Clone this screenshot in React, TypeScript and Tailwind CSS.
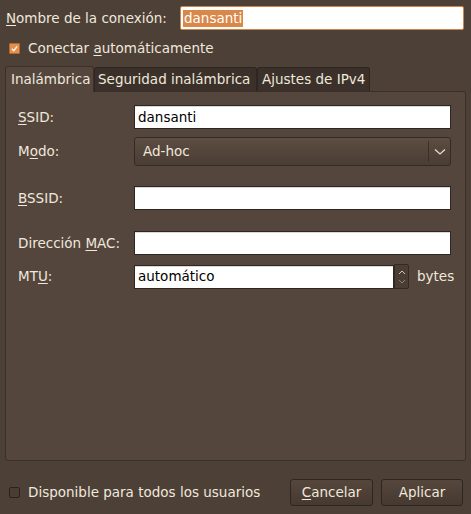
import React from 'react';

const font = { fontFamily: '"DejaVu Sans", "Liberation Sans", sans-serif' };

function Field({ value = '' }: { value?: string }) {
  return (
    <div className="flex h-[24px] w-[317px] items-center border border-[#2e2620] bg-white px-[3px] text-black shadow-[inset_0_1px_0_#d8d8d8]">
      {value}
    </div>
  );
}

function Label({ pre = '', u, post = '' }: { pre?: string; u: string; post?: string }) {
  return (
    <span className="w-[116px] text-[#efe8dc]">
      {pre}
      <span className="underline underline-offset-2">{u}</span>
      {post}
    </span>
  );
}

export default function App() {
  return (
    <div style={font} className="flex h-[514px] w-[471px] flex-col bg-[#4d4037] text-[13.5px] text-[#efe8dc]">
      {/* connection name */}
      <div className="mt-[6px] flex h-[24px] items-center pl-[6px]">
        <span className="w-[174px]">
          <span className="underline underline-offset-2">N</span>ombre de la conexión:
        </span>
        <div className="flex h-[24px] w-[284px] items-center rounded-[2px] border border-[#d0844a] bg-white px-[2px]">
          <span className="bg-[#d9884a] px-[1px] leading-[17px] text-white">dansanti</span>
        </div>
      </div>

      {/* autoconnect */}
      <div className="mt-[11px] flex h-[14px] items-center pl-[9px]">
        <span className="flex h-[11px] w-[11px] items-center justify-center rounded-[1px] border border-[#b8682f] bg-[#e0904f]">
          <svg viewBox="0 0 10 10" className="h-[9px] w-[9px]">
            <path d="M2 5.2 L4.2 7.4 L8 2.6" fill="none" stroke="#fff3e4" strokeWidth="1.6" />
          </svg>
        </span>
        <span className="ml-[8px]">
          Conectar <span className="underline underline-offset-2">a</span>utomáticamente
        </span>
      </div>

      {/* tabs */}
      <div className="mt-[11px] flex h-[25px] items-end pl-[5px]">
        <div className="relative z-10 -mb-px flex h-[26px] w-[89px] items-center rounded-t-[3px] border border-b-0 border-[#3a3029] bg-[#54463c] pl-[5px]">
          Inalámbrica
        </div>
        <div className="flex h-[24px] w-[163px] items-center rounded-t-[3px] border border-b-0 border-[#2e2620] bg-[#3b312a] pl-[3px]">
          Seguridad inalámbrica
        </div>
        <div className="flex h-[24px] w-[113px] items-center rounded-t-[3px] border border-b-0 border-[#2e2620] bg-[#3b312a] pl-[4px]">
          Ajustes de IPv4
        </div>
      </div>

      {/* panel */}
      <div className="ml-[5px] flex h-[370px] w-[461px] flex-col rounded-b-[3px] rounded-tr-[3px] border border-[#3a3029] bg-[#54463c] pl-[12px]">
        <div className="mt-[13px] flex items-center">
          <Label u="S" post="SID:" />
          <Field value="dansanti" />
        </div>
        <div className="mt-[8px] flex items-center">
          <Label pre="M" u="o" post="do:" />
          <div className="flex h-[29px] w-[317px] items-center rounded-[3px] border border-[#332a24] bg-gradient-to-b from-[#5d4d42] to-[#4a3d34] pl-[8px]">
            <span className="flex-1">Ad-hoc</span>
            <span className="h-[21px] w-px bg-[#3a3029]" />
            <span className="flex w-[21px] justify-center">
              <svg viewBox="0 0 12 8" className="h-[8px] w-[12px]">
                <path d="M1 1.5 L6 6 L11 1.5" fill="none" stroke="#e4dcd0" strokeWidth="1.3" />
              </svg>
            </span>
          </div>
        </div>
        <div className="mt-[20px] flex items-center">
          <Label u="B" post="SSID:" />
          <Field />
        </div>
        <div className="mt-[21px] flex items-center">
          <Label pre="Dirección " u="M" post="AC:" />
          <Field />
        </div>
        <div className="mt-[9px] flex items-center">
          <Label pre="MT" u="U" post=":" />
          <div className="flex h-[24px] w-[260px] items-center border border-[#2e2620] bg-white px-[3px] text-black shadow-[inset_0_1px_0_#d8d8d8]">
            automático
          </div>
          <div className="flex h-[25px] w-[15px] flex-col items-center justify-center rounded-r-[2px] border border-[#332a24] bg-[#4a3d34]">
            <svg viewBox="0 0 10 20" className="h-[20px] w-[10px]">
              <path d="M2 7 L5 4 L8 7" fill="none" stroke="#cfc5b8" strokeWidth="1" />
              <path d="M2 13 L5 16 L8 13" fill="none" stroke="#8e8276" strokeWidth="1" />
            </svg>
          </div>
          <span className="ml-[8px]">bytes</span>
        </div>
      </div>

      {/* bottom row */}
      <div className="mt-[18px] flex h-[27px] items-center pl-[9px]">
        <span className="h-[11px] w-[11px] rounded-[2px] border border-[#2a221c] bg-[#4a3d34]" />
        <span className="ml-[8px] flex-1">Disponible para todos los usuarios</span>
        <button className="mr-[8px] flex h-[27px] w-[83px] items-center justify-center rounded-[3px] border border-[#2e2620] bg-gradient-to-b from-[#56473d] to-[#46392f]">
          <span>
            <span className="underline underline-offset-2">C</span>ancelar
          </span>
        </button>
        <button className="mr-[8px] flex h-[27px] w-[82px] items-center justify-center rounded-[3px] border border-[#2e2620] bg-gradient-to-b from-[#56473d] to-[#46392f]">
          Aplicar
        </button>
      </div>
    </div>
  );
}
